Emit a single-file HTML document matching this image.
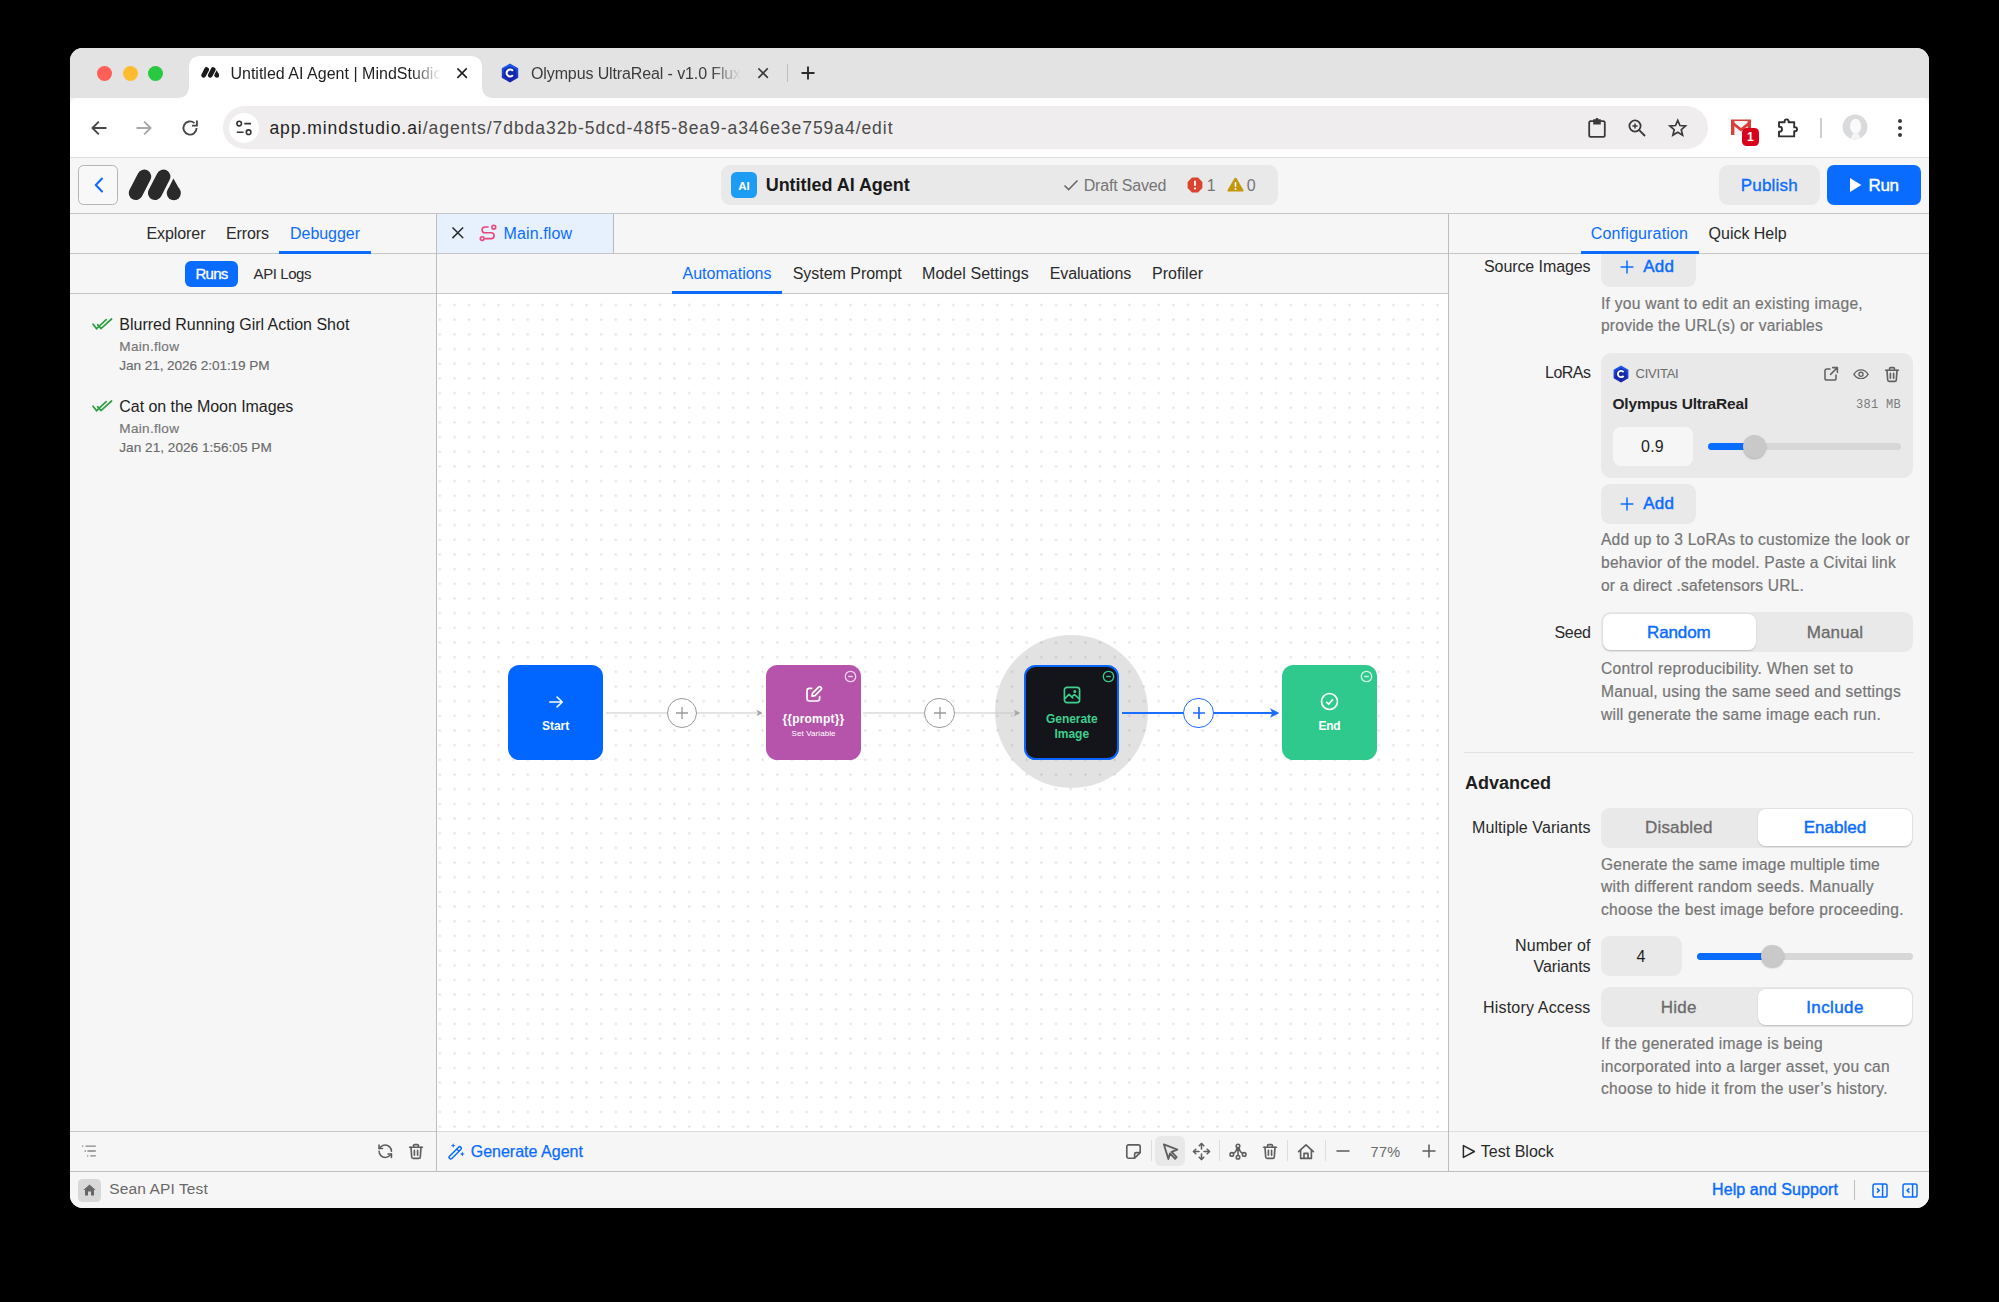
<!DOCTYPE html>
<html><head><meta charset="utf-8"><title>MindStudio</title>
<style>
html,body{margin:0;padding:0;background:#000;}
body{width:1999px;height:1302px;position:relative;overflow:hidden;font-family:"Liberation Sans",sans-serif;}
#win{position:absolute;left:0;top:0;width:1999px;height:1302px;clip-path:inset(48px 70px 94px 70px round 12.5px);background:#f6f6f6;}
.t{position:absolute;white-space:nowrap;font-kerning:none;}
.b{position:absolute;display:block;}
</style></head><body><div id="win">
<div class="b" style="left:70px;top:48px;width:1859px;height:50px;background:#e3e3e3;"></div>
<div class="b" style="left:70px;top:98px;width:1859px;height:59px;background:#ffffff;border-radius:8px 8px 0 0;"></div>
<div class="b" style="left:70px;top:157px;width:1859px;height:1px;background:#dcdcdc;"></div>
<svg class="b" style="left:177px;top:56px" width="318" height="42" viewBox="0 0 318 42">
<path d="M0 42 C8 42 12 38 12 30 L12 12 C12 4 16 0 24 0 L293 0 C301 0 305 4 305 12 L305 30 C305 38 309 42 317 42 Z" fill="#ffffff"/></svg>
<div class="b" style="left:97.10000000000001px;top:66.2px;width:15.2px;height:15.2px;background:#fe5f57;border-radius:8px;"></div>
<div class="b" style="left:122.6px;top:66.2px;width:15.2px;height:15.2px;background:#febc2e;border-radius:8px;"></div>
<div class="b" style="left:147.70000000000002px;top:66.2px;width:15.2px;height:15.2px;background:#28c840;border-radius:8px;"></div>
<svg class="b" style="left:200.70px;top:67.30px;" width="18.6" height="11" viewBox="128 169 54 32"><g fill="#1b1b1b" stroke="#1b1b1b"><g stroke-width="14" stroke-linecap="round"><line x1="144.2" y1="176.6" x2="135.8" y2="193"/><line x1="163.4" y1="176.6" x2="155" y2="193"/></g><circle cx="173.8" cy="193.2" r="7" stroke="none"/><path d="M173.4 178.6 L167.7 189.9 L179.9 189.9 Z" stroke="none" stroke-linejoin="round"/></g></svg>
<div class="t" style="left:230.40px;top:62.70px;font:400 16px/22px 'Liberation Sans',sans-serif;color:#1f1f1f;letter-spacing:0.017px;-webkit-mask-image:linear-gradient(90deg,#000 86%,transparent 100%);mask-image:linear-gradient(90deg,#000 86%,transparent 100%);">Untitled AI Agent | MindStudic</div>
<svg class="b" style="left:456.30px;top:67.20px;" width="12.2" height="12.2" viewBox="0 0 12.2 12.2"><path d="M2 2 L10.2 10.2 M10.2 2 L2 10.2" stroke="#1f1f1f" stroke-width="1.7" stroke-linecap="square" fill="none"/></svg>
<svg class="b" style="left:500.40px;top:63.00px;" width="20" height="20" viewBox="0 0 20 20"><defs><linearGradient id="cg" x1="0" y1="0" x2="0" y2="1"><stop offset="0" stop-color="#1f5bf0"/><stop offset="1" stop-color="#1a1fa8"/></linearGradient></defs><path d="M10 0.6 L18.2 5.3 V14.7 L10 19.4 L1.8 14.7 V5.3 Z" fill="url(#cg)"/><path d="M10 3.2 L15.9 6.6 V13.4 L10 16.8 L4.1 13.4 V6.6 Z" fill="#0d1a8a" opacity="0.55"/><path d="M12.9 7.9 A3.5 3.5 0 1 0 12.9 12.1" fill="none" stroke="#fff" stroke-width="2.1"/></svg>
<div class="t" style="left:531.00px;top:62.70px;font:400 16px/22px 'Liberation Sans',sans-serif;color:#3c3c3c;letter-spacing:-0.117px;-webkit-mask-image:linear-gradient(90deg,#000 86%,transparent 100%);mask-image:linear-gradient(90deg,#000 86%,transparent 100%);">Olympus UltraReal - v1.0 Flux</div>
<svg class="b" style="left:756.90px;top:67.20px;" width="12.2" height="12.2" viewBox="0 0 12.2 12.2"><path d="M2 2 L10.2 10.2 M10.2 2 L2 10.2" stroke="#3c3c3c" stroke-width="1.7" stroke-linecap="square" fill="none"/></svg>
<div class="b" style="left:786.5px;top:64px;width:1.5px;height:18px;background:#bdbdbd;"></div>
<svg class="b" style="left:800.00px;top:65.00px;" width="16" height="16" viewBox="0 0 16 16"><path d="M8 1.5 V14.5 M1.5 8 H14.5" stroke="#2b2b2b" stroke-width="1.9" fill="none"/></svg>
<svg class="b" style="left:89.00px;top:117.50px;" width="20" height="20" viewBox="0 0 20 20"><path d="M17.5 10 H3.5 M9.8 3.6 L3.4 10 L9.8 16.4" stroke="#474747" stroke-width="1.9" fill="none" stroke-linejoin="miter"/></svg>
<svg class="b" style="left:134.00px;top:117.50px;" width="20" height="20" viewBox="0 0 20 20"><path d="M2.5 10 H16.5 M10.2 3.6 L16.6 10 L10.2 16.4" stroke="#a8a8a8" stroke-width="1.9" fill="none"/></svg>
<svg class="b" style="left:179.50px;top:117.50px;" width="20" height="20" viewBox="0 0 20 20"><path d="M16.6 10 A6.6 6.6 0 1 1 14.4 5.1" stroke="#474747" stroke-width="1.9" fill="none"/><path d="M16.9 2.6 V7.6 H11.9" stroke="#474747" stroke-width="1.9" fill="none"/></svg>
<div class="b" style="left:223px;top:106px;width:1485px;height:43px;background:#efedee;border-radius:21.5px;"></div>
<div class="b" style="left:229px;top:112.5px;width:30px;height:30px;background:#ffffff;border-radius:15px;"></div>
<svg class="b" style="left:235.00px;top:119.50px;" width="18" height="16" viewBox="0 0 18 16"><circle cx="4.2" cy="3.6" r="2.3" fill="none" stroke="#333" stroke-width="1.6"/><path d="M9.3 3.6 H16" stroke="#333" stroke-width="1.6"/><circle cx="13.6" cy="12.2" r="2.3" fill="none" stroke="#333" stroke-width="1.6"/><path d="M1.8 12.2 H8.6" stroke="#333" stroke-width="1.6"/></svg>
<div class="t" style="left:269.4px;top:115.7px;font:400 17.5px/24px 'Liberation Sans',sans-serif;letter-spacing:0.949px;color:#1f1f1f">app.mindstudio.ai<span style="color:#4a4a4a">/agents/7dbda32b-5dcd-48f5-8ea9-a346e3e759a4/edit</span></div>
<svg class="b" style="left:1587.00px;top:117.00px;" width="20" height="22" viewBox="0 0 20 22"><rect x="2.2" y="4.2" width="15.6" height="15.6" rx="1.6" fill="none" stroke="#3a3a3a" stroke-width="1.8"/><path d="M6.2 2.2 H13.8 V7.4 H6.2 Z" fill="#3a3a3a"/><rect x="8.6" y="1" width="2.8" height="2.4" rx="1" fill="#3a3a3a"/></svg>
<svg class="b" style="left:1627.20px;top:117.90px;" width="20" height="20" viewBox="0 0 20 20"><circle cx="8" cy="8" r="5.6" fill="none" stroke="#3a3a3a" stroke-width="1.8"/><path d="M12.2 12.2 L18 18" stroke="#3a3a3a" stroke-width="1.9"/><path d="M8 5.4 V10.6 M5.4 8 H10.6" stroke="#3a3a3a" stroke-width="1.5"/></svg>
<svg class="b" style="left:1668.25px;top:117.65px;" width="19.5" height="19.5" viewBox="0 0 22 22"><path d="M11 2.6 L13.5 8.5 L19.8 9 L15 13.2 L16.5 19.4 L11 16.1 L5.5 19.4 L7 13.2 L2.2 9 L8.5 8.5 Z" fill="none" stroke="#3a3a3a" stroke-width="1.9" stroke-linejoin="miter"/></svg>
<svg class="b" style="left:1729.60px;top:118.50px;" width="22" height="17" viewBox="0 0 22 17"><path d="M1 1 H21 V16 H1 Z" fill="#f4f4f4"/><path d="M1 1 H4.4 V16 H1 Z M17.6 1 H21 V16 H17.6 Z" fill="#d8403a"/><path d="M1 1 L11 9 L21 1 V4.6 L11 12.4 L1 4.6 Z" fill="#d8403a"/><path d="M1 0.6 H21 V2 H1 Z" fill="#d8403a"/></svg>
<div class="b" style="left:1741.5px;top:128px;width:17.5px;height:17.5px;background:#d9001b;border-radius:4.5px;"></div>
<div class="t" style="left:1746.96px;top:129.00px;font:700 12px/17px 'Liberation Sans',sans-serif;color:#fff;">1</div>
<svg class="b" style="left:1775.30px;top:114.80px;" width="24" height="24" viewBox="0 0 24 24"><path d="M4 7.2 H9.6 V6.4 A2 2 0 0 1 13.6 6.4 V7.2 H19.2 V12.2 H20 A2 2 0 0 1 20 16.2 H19.2 V21.4 H4 V16.6 H4.6 A2.4 2.4 0 0 0 4.6 11.8 H4 Z" fill="none" stroke="#2f2f2f" stroke-width="1.9" stroke-linejoin="round"/></svg>
<div class="b" style="left:1820.3px;top:118px;width:1.6px;height:19.5px;background:#d0d0d0;"></div>
<svg class="b" style="left:1841.70px;top:114.30px;" width="26" height="26" viewBox="0 0 26 26"><defs><clipPath id="av"><circle cx="13" cy="13" r="12.4"/></clipPath></defs><circle cx="13" cy="13" r="12.4" fill="#d9dadc"/><g clip-path="url(#av)"><ellipse cx="13.6" cy="12.2" rx="5.6" ry="7.4" fill="#fafafb"/><path d="M9 27 C9 21 11 19 13.6 19 C16.4 19 18.4 21 18.4 27 Z" fill="#f4f4f6"/></g></svg>
<div class="b" style="left:1898.4px;top:119.4px;width:3.6px;height:3.6px;background:#3a3a3a;border-radius:2px;"></div>
<div class="b" style="left:1898.4px;top:126.2px;width:3.6px;height:3.6px;background:#3a3a3a;border-radius:2px;"></div>
<div class="b" style="left:1898.4px;top:133.0px;width:3.6px;height:3.6px;background:#3a3a3a;border-radius:2px;"></div>
<div class="b" style="left:70px;top:158px;width:1859px;height:55px;background:#f6f6f6;"></div>
<div class="b" style="left:70px;top:212.5px;width:1859px;height:1.5px;background:#c6c6c6;"></div>
<div class="b" style="left:78px;top:165px;width:40px;height:40px;background:#f8f8f8;border-radius:5.5px;border:1px solid #b4b4b4;box-sizing:border-box;"></div>
<svg class="b" style="left:92.50px;top:176.00px;" width="12" height="18" viewBox="0 0 12 18"><path d="M9 2.5 L2.8 9 L9 15.5" stroke="#0a6cff" stroke-width="2" fill="none" stroke-linecap="round" stroke-linejoin="round"/></svg>
<svg class="b" style="left:128.00px;top:169.00px;" width="54" height="32" viewBox="128 169 54 32"><g fill="#2a2a2a" stroke="#2a2a2a"><g stroke-width="14" stroke-linecap="round"><line x1="144.2" y1="176.6" x2="135.8" y2="193"/><line x1="163.4" y1="176.6" x2="155" y2="193"/></g><circle cx="173.8" cy="193.2" r="7" stroke="none"/><path d="M173.4 178.6 L167.7 189.9 L179.9 189.9 Z" stroke="none" stroke-linejoin="round"/></g></svg>
<div class="b" style="left:721px;top:165px;width:557px;height:40px;background:#e9e9e9;border-radius:9px;"></div>
<div class="b" style="left:731px;top:172px;width:26px;height:26px;background:#1c9cf2;border-radius:5.5px;"></div>
<div class="t" style="left:738.25px;top:177.90px;font:700 11.5px/16px 'Liberation Sans',sans-serif;color:#ffffff;">AI</div>
<div class="t" style="left:765.70px;top:173.20px;font:700 18px/25px 'Liberation Sans',sans-serif;color:#1a1a1a;letter-spacing:-0.038px;">Untitled AI Agent</div>
<svg class="b" style="left:1062.60px;top:179.00px;" width="16" height="12" viewBox="0 0 16 12"><path d="M1.5 6.5 L5.6 10.5 L14.5 1.5" stroke="#6a6a6a" stroke-width="1.6" fill="none"/></svg>
<div class="t" style="left:1083.70px;top:174.70px;font:400 16px/22px 'Liberation Sans',sans-serif;color:#757575;letter-spacing:-0.180px;">Draft Saved</div>
<svg class="b" style="left:1186.50px;top:177.00px;" width="16" height="16" viewBox="0 0 16 16"><path d="M5 0.6 H11 L15.4 5 V11 L11 15.4 H5 L0.6 11 V5 Z" fill="#d9452f"/><rect x="7.1" y="3.6" width="1.8" height="5.4" rx="0.9" fill="#fff"/><circle cx="8" cy="11.5" r="1.1" fill="#fff"/></svg>
<div class="t" style="left:1206.75px;top:174.70px;font:400 16px/22px 'Liberation Sans',sans-serif;color:#757575;">1</div>
<svg class="b" style="left:1226.50px;top:177.10px;" width="17" height="15" viewBox="0 0 17 15"><path d="M8.5 0.8 C9 0.8 9.4 1 9.7 1.5 L16.4 13 C16.9 13.9 16.3 14.6 15.4 14.6 H1.6 C0.7 14.6 0.1 13.9 0.6 13 L7.3 1.5 C7.6 1 8 0.8 8.5 0.8 Z" fill="#c4960c"/><rect x="7.7" y="5" width="1.6" height="5" rx="0.8" fill="#fff"/><circle cx="8.5" cy="12" r="1" fill="#fff"/></svg>
<div class="t" style="left:1246.85px;top:174.70px;font:400 16px/22px 'Liberation Sans',sans-serif;color:#757575;">0</div>
<div class="b" style="left:1719px;top:165px;width:100.5px;height:40px;background:#e9e9e9;border-radius:9px;"></div>
<div class="t" style="left:1740.80px;top:173.70px;font:400 17px/24px 'Liberation Sans',sans-serif;color:#0a6cff;letter-spacing:0.178px;-webkit-text-stroke:0.35px #0a6cff;">Publish</div>
<div class="b" style="left:1827px;top:165px;width:94px;height:40px;background:#0a6cff;border-radius:7px;"></div>
<svg class="b" style="left:1849.00px;top:177.00px;" width="13" height="16" viewBox="0 0 13 16"><path d="M1 1 L12.3 8 L1 15 Z" fill="#fff"/></svg>
<div class="t" style="left:1868.50px;top:173.70px;font:400 17px/24px 'Liberation Sans',sans-serif;color:#ffffff;letter-spacing:-0.395px;-webkit-text-stroke:0.4px #ffffff;">Run</div>
<div class="b" style="left:436px;top:214px;width:1px;height:957px;background:#bdbdbd;"></div>
<div class="b" style="left:70px;top:253px;width:366px;height:1px;background:#c6c6c6;"></div>
<div class="b" style="left:70px;top:293px;width:366px;height:1px;background:#c6c6c6;"></div>
<div class="t" style="left:146.40px;top:223.10px;font:400 16px/22px 'Liberation Sans',sans-serif;color:#2a2a2a;letter-spacing:-0.072px;">Explorer</div>
<div class="t" style="left:226.00px;top:223.10px;font:400 16px/22px 'Liberation Sans',sans-serif;color:#2a2a2a;letter-spacing:-0.092px;">Errors</div>
<div class="t" style="left:290.00px;top:223.10px;font:400 16px/22px 'Liberation Sans',sans-serif;color:#0a6cff;letter-spacing:-0.033px;">Debugger</div>
<div class="b" style="left:279px;top:251px;width:91.5px;height:2.5px;background:#0a6cff;"></div>
<div class="b" style="left:185px;top:260.5px;width:53px;height:26.5px;background:#0a6cff;border-radius:6px;"></div>
<div class="t" style="left:195.50px;top:263.10px;font:400 15px/21px 'Liberation Sans',sans-serif;color:#ffffff;letter-spacing:-0.754px;-webkit-text-stroke:0.3px #ffffff;">Runs</div>
<div class="t" style="left:253.60px;top:263.10px;font:400 15px/21px 'Liberation Sans',sans-serif;color:#2a2a2a;letter-spacing:-0.421px;">API Logs</div>
<svg class="b" style="left:91.80px;top:318.20px;" width="21" height="12" viewBox="0 0 21 12"><path d="M1 6.2 L4.6 10.6 M5.6 6.6 L9 10.6 L19.6 1" stroke="#2f9e44" stroke-width="1.7" fill="none" stroke-linecap="round"/><path d="M4.6 10.6 L14.2 1.6" stroke="#2f9e44" stroke-width="1.7" fill="none" stroke-linecap="round"/></svg>
<div class="t" style="left:119.30px;top:314.20px;font:400 16px/22px 'Liberation Sans',sans-serif;color:#1f1f1f;letter-spacing:-0.010px;">Blurred Running Girl Action Shot</div>
<div class="t" style="left:119.30px;top:336.70px;font:400 13.6px/19px 'Liberation Sans',sans-serif;color:#757575;letter-spacing:0.285px;-webkit-text-stroke:0.15px #757575;">Main.flow</div>
<div class="t" style="left:119.30px;top:356.10px;font:400 13.6px/19px 'Liberation Sans',sans-serif;color:#6a6a6a;letter-spacing:-0.072px;-webkit-text-stroke:0.15px #6a6a6a;">Jan 21, 2026 2:01:19 PM</div>
<svg class="b" style="left:91.80px;top:400.00px;" width="21" height="12" viewBox="0 0 21 12"><path d="M1 6.2 L4.6 10.6 M5.6 6.6 L9 10.6 L19.6 1" stroke="#2f9e44" stroke-width="1.7" fill="none" stroke-linecap="round"/><path d="M4.6 10.6 L14.2 1.6" stroke="#2f9e44" stroke-width="1.7" fill="none" stroke-linecap="round"/></svg>
<div class="t" style="left:119.30px;top:396.00px;font:400 16px/22px 'Liberation Sans',sans-serif;color:#1f1f1f;letter-spacing:-0.054px;">Cat on the Moon Images</div>
<div class="t" style="left:119.30px;top:418.50px;font:400 13.6px/19px 'Liberation Sans',sans-serif;color:#757575;letter-spacing:0.285px;-webkit-text-stroke:0.15px #757575;">Main.flow</div>
<div class="t" style="left:119.30px;top:437.90px;font:400 13.6px/19px 'Liberation Sans',sans-serif;color:#6a6a6a;letter-spacing:0.023px;-webkit-text-stroke:0.15px #6a6a6a;">Jan 21, 2026 1:56:05 PM</div>
<div class="b" style="left:70px;top:1130.5px;width:366px;height:1px;background:#c6c6c6;"></div>
<svg class="b" style="left:81.00px;top:1145.20px;" width="16" height="12" viewBox="0 0 16 12"><g stroke="#858585" stroke-width="1.3" fill="none"><path d="M4.5 1.2 H14.8 M6.4 6 H14.8 M9.3 10.8 H14.8"/><path d="M0.9 1.2 H2.2 M3.6 6 H4.9 M6 10.8 H7.3"/></g></svg>
<div class="b" style="left:437px;top:214px;width:176px;height:39px;background:#e7f1fd;"></div>
<div class="b" style="left:613px;top:214px;width:1px;height:39px;background:#b9b9b9;"></div>
<div class="b" style="left:437px;top:253px;width:1011px;height:1px;background:#c6c6c6;"></div>
<div class="b" style="left:437px;top:293px;width:1011px;height:1px;background:#c6c6c6;"></div>
<svg class="b" style="left:450.60px;top:226.40px;" width="13.6" height="13.6" viewBox="0 0 13.6 13.6"><path d="M2 2 L11.6 11.6 M11.6 2 L2 11.6" stroke="#2a2a2a" stroke-width="1.5" stroke-linecap="square" fill="none"/></svg>
<div class="t" style="left:503.60px;top:222.90px;font:400 16px/22px 'Liberation Sans',sans-serif;color:#0a6cff;letter-spacing:0.103px;">Main.flow</div>
<svg class="b" style="left:478.70px;top:224.00px;" width="18" height="18" viewBox="0 0 18 18"><g fill="none" stroke="#e8467c" stroke-width="1.6"><circle cx="3.2" cy="14.6" r="1.9"/><circle cx="14.8" cy="3.2" r="1.9"/><path d="M5.4 14.6 H12.2 A2.9 2.9 0 0 0 12.2 8.8 H6 A2.9 2.9 0 0 1 6 3 H9.6"/></g></svg>
<div class="t" style="left:682.50px;top:263.30px;font:400 16px/22px 'Liberation Sans',sans-serif;color:#0a6cff;letter-spacing:0.006px;">Automations</div>
<div class="t" style="left:792.70px;top:263.30px;font:400 16px/22px 'Liberation Sans',sans-serif;color:#2a2a2a;letter-spacing:-0.027px;">System Prompt</div>
<div class="t" style="left:922.00px;top:263.30px;font:400 16px/22px 'Liberation Sans',sans-serif;color:#2a2a2a;letter-spacing:0.062px;">Model Settings</div>
<div class="t" style="left:1049.80px;top:263.30px;font:400 16px/22px 'Liberation Sans',sans-serif;color:#2a2a2a;letter-spacing:-0.138px;">Evaluations</div>
<div class="t" style="left:1151.90px;top:263.30px;font:400 16px/22px 'Liberation Sans',sans-serif;color:#2a2a2a;letter-spacing:0.065px;">Profiler</div>
<div class="b" style="left:672.4px;top:291px;width:109.6px;height:2.5px;background:#0a6cff;"></div>
<div class="b" style="left:437px;top:294px;width:1011px;height:836.5px;background:#ffffff;background-image:radial-gradient(circle at 1.5px 1.5px,#e1e1e1 0.8px,rgba(225,225,225,0) 1.5px);background-size:14.678px 14.678px;background-position:1.30px 9.50px;"></div>
<div class="b" style="left:995.3px;top:635.3px;width:153px;height:153px;background:rgba(110,110,110,0.2);border-radius:77px;"></div>
<svg class="b" style="left:605.50px;top:706.90px;" width="156.89999999999998" height="12" viewBox="0 0 156.89999999999998 12"><path d="M0 6 H153.89999999999998" stroke="#c8c8c8" stroke-width="1" fill="none"/><path d="M150.39999999999998 2.7 L156.89999999999998 6 L150.39999999999998 9.3 L152.02499999999998 6 Z" fill="#a6a6a6"/></svg>
<div class="b" style="left:666.9000000000001px;top:697.6px;width:30.6px;height:30.6px;background:#ffffff;border-radius:16px;border:1px solid #9a9a9a;box-sizing:border-box;"></div>
<svg class="b" style="left:675.20px;top:705.90px;" width="14" height="14" viewBox="0 0 14 14"><path d="M7 1 V13 M1 7 H13" stroke="#9a9a9a" stroke-width="1.3" fill="none"/></svg>
<svg class="b" style="left:863.00px;top:706.90px;" width="157.29999999999995" height="12" viewBox="0 0 157.29999999999995 12"><path d="M0 6 H154.29999999999995" stroke="#c8c8c8" stroke-width="1" fill="none"/><path d="M150.79999999999995 2.7 L157.29999999999995 6 L150.79999999999995 9.3 L152.42499999999995 6 Z" fill="#a6a6a6"/></svg>
<div class="b" style="left:924.4000000000001px;top:697.6px;width:30.6px;height:30.6px;background:#ffffff;border-radius:16px;border:1px solid #9a9a9a;box-sizing:border-box;"></div>
<svg class="b" style="left:932.70px;top:705.90px;" width="14" height="14" viewBox="0 0 14 14"><path d="M7 1 V13 M1 7 H13" stroke="#9a9a9a" stroke-width="1.3" fill="none"/></svg>
<svg class="b" style="left:1121.50px;top:706.90px;" width="157.5" height="12" viewBox="0 0 157.5 12"><path d="M0 6 H154.5" stroke="#1a6dff" stroke-width="1.8" fill="none"/><path d="M148.0 1.2999999999999998 L157.5 6 L148.0 10.7 L150.375 6 Z" fill="#1a6dff"/></svg>
<div class="b" style="left:1183.2px;top:697.6px;width:30.6px;height:30.6px;background:#ffffff;border-radius:16px;border:1.6px solid #1a6dff;box-sizing:border-box;"></div>
<svg class="b" style="left:1191.50px;top:705.90px;" width="14" height="14" viewBox="0 0 14 14"><path d="M7 1 V13 M1 7 H13" stroke="#1a6dff" stroke-width="1.7" fill="none"/></svg>
<div class="b" style="left:508px;top:665px;width:95px;height:95px;background:#0066ff;border-radius:11.5px;"></div>
<svg class="b" style="left:547.60px;top:695.00px;" width="16" height="14" viewBox="0 0 16 14"><path d="M1.2 7 H14 M8.6 1.6 L14.2 7 L8.6 12.4" stroke="#fff" stroke-width="1.5" fill="none"/></svg>
<div class="t" style="left:542.10px;top:717.80px;font:700 12px/17px 'Liberation Sans',sans-serif;color:#ffffff;letter-spacing:-0.068px;">Start</div>
<div class="b" style="left:766px;top:665px;width:95px;height:95px;background:#b654ab;border-radius:11.5px;"></div>
<svg class="b" style="left:844.10px;top:669.90px;" width="13" height="13" viewBox="0 0 13 13"><circle cx="6.5" cy="6.5" r="5.2" fill="none" stroke="#f0d3ec" stroke-width="1.3"/><path d="M4.2 6.5 H8.8" stroke="#f0d3ec" stroke-width="1.4"/></svg>
<svg class="b" style="left:804.60px;top:685.40px;" width="18" height="18" viewBox="0 0 18 18"><g fill="none" stroke="#fff" stroke-width="1.7" stroke-linejoin="round" stroke-linecap="round"><path d="M6.6 3.4 H4.4 A2.4 2.4 0 0 0 2 5.8 V13.6 A2.4 2.4 0 0 0 4.4 16 H12.2 A2.4 2.4 0 0 0 14.6 13.6 V11.6"/><path d="M7 11.2 L7.6 8.2 L13.6 2.2 A1.7 1.7 0 0 1 16 4.6 L10 10.6 Z"/></g></svg>
<div class="t" style="left:782.40px;top:710.50px;font:700 12px/17px 'Liberation Sans',sans-serif;color:#ffffff;letter-spacing:0.199px;">{{prompt}}</div>
<div class="t" style="left:791.60px;top:728.40px;font:400 8px/11px 'Liberation Sans',sans-serif;color:#ffffff;letter-spacing:0.084px;">Set Variable</div>
<div class="b" style="left:1024px;top:665px;width:95px;height:95px;background:#14151a;border-radius:11.5px;border:2px solid #0a66ff;box-sizing:border-box;"></div>
<svg class="b" style="left:1102.30px;top:669.80px;" width="13" height="13" viewBox="0 0 13 13"><circle cx="6.5" cy="6.5" r="5.2" fill="none" stroke="#39c98a" stroke-width="1.3"/><path d="M4.2 6.5 H8.8" stroke="#39c98a" stroke-width="1.4"/></svg>
<svg class="b" style="left:1062.80px;top:685.60px;" width="18" height="18" viewBox="0 0 18 18"><g fill="none" stroke="#3ecf8e" stroke-width="1.65" stroke-linejoin="round" stroke-linecap="round"><rect x="1.4" y="1.4" width="15.2" height="15.2" rx="2.6"/><path d="M1.8 12.6 L6 8.4 L9.8 12 M8.6 10.8 L11.4 8.6 L16.2 12.6"/><circle cx="11.8" cy="5.4" r="0.7" fill="#3ecf8e"/></g></svg>
<div class="t" style="left:1046.05px;top:710.50px;font:700 12px/17px 'Liberation Sans',sans-serif;color:#3ecf8e;letter-spacing:-0.065px;">Generate</div>
<div class="t" style="left:1054.55px;top:725.60px;font:700 12px/17px 'Liberation Sans',sans-serif;color:#3ecf8e;letter-spacing:-0.036px;">Image</div>
<div class="b" style="left:1282px;top:665px;width:95px;height:95px;background:#30c98d;border-radius:11.5px;"></div>
<svg class="b" style="left:1360.10px;top:669.80px;" width="13" height="13" viewBox="0 0 13 13"><circle cx="6.5" cy="6.5" r="5.2" fill="none" stroke="#d5f5e8" stroke-width="1.3"/><path d="M4.2 6.5 H8.8" stroke="#d5f5e8" stroke-width="1.4"/></svg>
<svg class="b" style="left:1319.90px;top:692.00px;" width="19" height="19" viewBox="0 0 19 19"><circle cx="9.5" cy="9.5" r="8" fill="none" stroke="#fff" stroke-width="1.7"/><path d="M6.2 9.8 L8.7 12.2 L12.9 7.4" stroke="#fff" stroke-width="1.6" fill="none"/></svg>
<div class="t" style="left:1318.60px;top:717.70px;font:700 12px/17px 'Liberation Sans',sans-serif;color:#ffffff;letter-spacing:-0.354px;">End</div>
<div class="b" style="left:437px;top:1130.5px;width:1011px;height:1px;background:#dadada;"></div>
<div class="b" style="left:437px;top:1131.5px;width:1011px;height:39.5px;background:#f6f6f6;"></div>
<div class="b" style="left:70px;top:1170.5px;width:1859px;height:1px;background:#bdbdbd;"></div>
<svg class="b" style="left:447.50px;top:1142.50px;" width="17" height="17" viewBox="0 0 17 17"><path d="M2.7 14.3 L11.7 5.3" stroke="#0a6cff" stroke-width="4.7" stroke-linecap="round"/><path d="M2.7 14.3 L11.7 5.3" stroke="#f6f6f6" stroke-width="1.7" stroke-linecap="round"/><path d="M8.7 6 L11 8.3" stroke="#0a6cff" stroke-width="1.4"/><path d="M5.2 0.20000000000000018 L5.872 1.928 L7.6 2.6 L5.872 3.2720000000000002 L5.2 5.0 L4.5280000000000005 3.2720000000000002 L2.8000000000000003 2.6 L4.5280000000000005 1.928 Z M14.3 8.6 L14.972000000000001 10.328 L16.7 11.0 L14.972000000000001 11.672 L14.3 13.4 L13.628 11.672 L11.9 11.0 L13.628 10.328 Z" fill="#0a6cff"/></svg>
<div class="t" style="left:470.70px;top:1140.70px;font:400 16px/22px 'Liberation Sans',sans-serif;color:#0a6cff;letter-spacing:0.009px;-webkit-text-stroke:0.25px #0a6cff;">Generate Agent</div>
<svg class="b" style="left:377.25px;top:1142.85px;" width="16.5" height="16.5" viewBox="0 0 24 24"><g fill="none" stroke="#5e5e5e" stroke-width="2.3" stroke-linecap="round" stroke-linejoin="round"><path d="M21 12a9 9 0 0 0-9-9 9.75 9.75 0 0 0-6.74 2.74L3 8"/><path d="M3 3v5h5"/><path d="M3 12a9 9 0 0 0 9 9 9.75 9.75 0 0 0 6.74-2.74L21 16"/><path d="M16 16h5v5"/></g></svg>
<svg class="b" style="left:407.90px;top:1142.60px;" width="16" height="17" viewBox="0 0 16 17"><g fill="none" stroke="#5e5e5e" stroke-width="1.65" stroke-linecap="round" stroke-linejoin="round"><path d="M1.6 4.2 H14.4"/><path d="M5.6 4 V2.6 A1 1 0 0 1 6.6 1.6 H9.4 A1 1 0 0 1 10.4 2.6 V4"/><path d="M3 4.4 L3.7 14 A1.5 1.5 0 0 0 5.2 15.4 H10.8 A1.5 1.5 0 0 0 12.3 14 L13 4.4"/><path d="M6.4 7.4 V12.2 M9.6 7.4 V12.2"/></g></svg>
<svg class="b" style="left:1124.80px;top:1142.70px;" width="17" height="17" viewBox="0 0 17 17"><g fill="none" stroke="#5e5e5e" stroke-width="1.65" stroke-linejoin="round"><path d="M3.6 1.8 H13.4 A1.8 1.8 0 0 1 15.2 3.6 V9.6 L9.6 15.2 H3.6 A1.8 1.8 0 0 1 1.8 13.4 V3.6 A1.8 1.8 0 0 1 3.6 1.8 Z"/><path d="M15 9.6 H11.2 A1.6 1.6 0 0 0 9.6 11.2 V15"/></g></svg>
<div class="b" style="left:1151.3px;top:1140px;width:1px;height:21px;background:#dedede;"></div>
<div class="b" style="left:1155px;top:1136.3px;width:30px;height:30px;background:#e8e8e8;border-radius:6px;"></div>
<svg class="b" style="left:1160.50px;top:1141.90px;" width="19" height="19" viewBox="0 0 17 17"><path d="M2.6 2.2 L14.6 6.8 L9.4 8.8 L14 13.6 L12.6 15 L8 10.2 L6.6 15.2 Z" fill="none" stroke="#5e5e5e" stroke-width="1.65" stroke-linejoin="round"/></svg>
<svg class="b" style="left:1192.30px;top:1141.70px;" width="19" height="19" viewBox="0 0 19 19"><g fill="none" stroke="#5e5e5e" stroke-width="1.55" stroke-linecap="round" stroke-linejoin="round"><path d="M9.5 1.6 V7 M9.5 12 V17.4 M1.6 9.5 H7 M12 9.5 H17.4"/><path d="M7.2 3.8 L9.5 1.5 L11.8 3.8 M7.2 15.2 L9.5 17.5 L11.8 15.2 M3.8 7.2 L1.5 9.5 L3.8 11.8 M15.2 7.2 L17.5 9.5 L15.2 11.8"/></g></svg>
<div class="b" style="left:1218.8px;top:1140px;width:1px;height:21px;background:#dedede;"></div>
<svg class="b" style="left:1229.00px;top:1142.50px;" width="18" height="17" viewBox="0 0 18 17"><g fill="none" stroke="#5e5e5e" stroke-width="1.55"><circle cx="9" cy="3" r="1.8"/><circle cx="2.8" cy="11.4" r="1.8"/><circle cx="15.2" cy="11.4" r="1.8"/><circle cx="9" cy="14.2" r="1.8"/><path d="M9 4.8 V12.4 M8.2 4.6 C7.6 8 5.8 9.6 4.4 10.4 M9.8 4.6 C10.4 8 12.2 9.6 13.6 10.4"/></g></svg>
<svg class="b" style="left:1261.50px;top:1142.50px;" width="16" height="17" viewBox="0 0 16 17"><g fill="none" stroke="#5e5e5e" stroke-width="1.65" stroke-linecap="round" stroke-linejoin="round"><path d="M1.6 4.2 H14.4"/><path d="M5.6 4 V2.6 A1 1 0 0 1 6.6 1.6 H9.4 A1 1 0 0 1 10.4 2.6 V4"/><path d="M3 4.4 L3.7 14 A1.5 1.5 0 0 0 5.2 15.4 H10.8 A1.5 1.5 0 0 0 12.3 14 L13 4.4"/><path d="M6.4 7.4 V12.2 M9.6 7.4 V12.2"/></g></svg>
<div class="b" style="left:1287.2px;top:1140px;width:1px;height:21px;background:#dedede;"></div>
<svg class="b" style="left:1297.30px;top:1142.50px;" width="18" height="17" viewBox="0 0 18 17"><g fill="none" stroke="#5e5e5e" stroke-width="1.65" stroke-linejoin="round" stroke-linecap="round"><path d="M1.6 8.6 L9 1.8 L16.4 8.6"/><path d="M3.6 7.2 V15.4 H14.4 V7.2"/><path d="M7 15.2 V10.4 H11 V15.2"/></g></svg>
<div class="b" style="left:1324.5px;top:1140px;width:1px;height:21px;background:#dedede;"></div>
<svg class="b" style="left:1335.50px;top:1149.30px;" width="14" height="4" viewBox="0 0 14 4"><path d="M0.5 2 H13.5" stroke="#5e5e5e" stroke-width="1.55"/></svg>
<div class="t" style="left:1370.50px;top:1141.70px;font:400 14.5px/20px 'Liberation Sans',sans-serif;color:#6a6a6a;letter-spacing:0.327px;">77%</div>
<svg class="b" style="left:1421.80px;top:1144.30px;" width="14" height="14" viewBox="0 0 14 14"><path d="M7 0.5 V13.5 M0.5 7 H13.5" stroke="#5e5e5e" stroke-width="1.55"/></svg>
<div class="b" style="left:70px;top:1171.5px;width:1859px;height:37px;background:#f6f6f6;"></div>
<div class="b" style="left:78px;top:1179px;width:23px;height:22.6px;background:#d8d8d8;border-radius:4.5px;"></div>
<svg class="b" style="left:83.10px;top:1184.20px;" width="13" height="12" viewBox="0 0 13 12"><path d="M6.5 0.6 L12.6 6 H11 V11.4 H8 V7.6 H5 V11.4 H2 V6 H0.4 Z" fill="#676767"/></svg>
<div class="t" style="left:109.30px;top:1178.40px;font:400 15.5px/22px 'Liberation Sans',sans-serif;color:#686868;letter-spacing:0.109px;">Sean API Test</div>
<div class="t" style="left:1712.00px;top:1179.00px;font:400 16px/22px 'Liberation Sans',sans-serif;color:#0a6cff;letter-spacing:0.092px;-webkit-text-stroke:0.4px #0a6cff;">Help and Support</div>
<div class="b" style="left:1853.6px;top:1180px;width:1.5px;height:19.5px;background:#bcbcbc;"></div>
<svg class="b" style="left:1872.00px;top:1182.50px;" width="16" height="15" viewBox="0 0 16 15"><g fill="none" stroke="#0a6cff" stroke-width="1.5"><rect x="1" y="1" width="14" height="13" rx="1.8"/><path d="M10.6 1 V14"/><path d="M5 5.4 L7.2 7.5 L5 9.6" stroke-width="1.55"/></g></svg>
<svg class="b" style="left:1902.00px;top:1182.50px;" width="16" height="15" viewBox="0 0 16 15"><g fill="none" stroke="#0a6cff" stroke-width="1.5"><rect x="1" y="1" width="14" height="13" rx="1.8"/><path d="M10.6 1 V14"/><path d="M7.4 5.4 L5.2 7.5 L7.4 9.6" stroke-width="1.55"/></g></svg>
<div class="b" style="left:1448px;top:214px;width:1px;height:957px;background:#bdbdbd;"></div>
<div class="b" style="left:1601px;top:246.5px;width:94.5px;height:40px;background:#e9e9e9;border-radius:9px;"></div>
<svg class="b" style="left:1620.00px;top:259.80px;" width="14" height="14" viewBox="0 0 14 14"><path d="M7 0.6 V13.4 M0.6 7 H13.4" stroke="#0a6cff" stroke-width="1.5"/></svg>
<div class="t" style="left:1643.20px;top:255.40px;font:400 17px/24px 'Liberation Sans',sans-serif;color:#0a6cff;letter-spacing:0.251px;-webkit-text-stroke:0.45px #0a6cff;">Add</div>
<div class="t" style="left:1484.00px;top:255.90px;font:400 16px/22px 'Liberation Sans',sans-serif;color:#2a2a2a;letter-spacing:-0.085px;">Source Images</div>
<div class="t" style="left:1601.00px;top:292.50px;font:400 15.6px/22px 'Liberation Sans',sans-serif;color:#757575;letter-spacing:0.255px;-webkit-text-stroke:0.2px #757575;">If you want to edit an existing image,</div>
<div class="t" style="left:1601.00px;top:315.10px;font:400 15.6px/22px 'Liberation Sans',sans-serif;color:#757575;letter-spacing:0.198px;-webkit-text-stroke:0.2px #757575;">provide the URL(s) or variables</div>
<div class="t" style="left:1545.00px;top:362.20px;font:400 16px/22px 'Liberation Sans',sans-serif;color:#2a2a2a;letter-spacing:-0.505px;">LoRAs</div>
<div class="b" style="left:1601px;top:352.5px;width:311.5px;height:125px;background:#e9e9e9;border-radius:10px;"></div>
<svg class="b" style="left:1611.80px;top:364.80px;" width="18" height="18" viewBox="0 0 20 20"><defs><linearGradient id="cg2" x1="0" y1="0" x2="0" y2="1"><stop offset="0" stop-color="#1f5bf0"/><stop offset="1" stop-color="#1a1fa8"/></linearGradient></defs><path d="M10 0.6 L18.2 5.3 V14.7 L10 19.4 L1.8 14.7 V5.3 Z" fill="url(#cg2)"/><path d="M10 3.2 L15.9 6.6 V13.4 L10 16.8 L4.1 13.4 V6.6 Z" fill="#0d1a8a" opacity="0.55"/><path d="M12.9 7.9 A3.5 3.5 0 1 0 12.9 12.1" fill="none" stroke="#fff" stroke-width="2.1"/></svg>
<div class="t" style="left:1635.50px;top:364.90px;font:400 13px/18px 'Liberation Sans',sans-serif;color:#6b6b6b;letter-spacing:-0.220px;">CIVITAI</div>
<svg class="b" style="left:1822.80px;top:366.00px;" width="16" height="16" viewBox="0 0 16 16"><g fill="none" stroke="#626262" stroke-width="1.55" stroke-linecap="round" stroke-linejoin="round"><path d="M7 3 H3.8 A1.8 1.8 0 0 0 2 4.8 V12.2 A1.8 1.8 0 0 0 3.8 14 H11.2 A1.8 1.8 0 0 0 13 12.2 V9"/><path d="M9.6 1.6 H14.4 V6.4 M14.2 1.8 L7.6 8.4"/></g></svg>
<svg class="b" style="left:1853.00px;top:368.65px;" width="16" height="10.7" viewBox="0 0 18 12"><g fill="none" stroke="#626262" stroke-width="1.55"><path d="M1 6 C3.2 2.4 6 1 9 1 C12 1 14.8 2.4 17 6 C14.8 9.6 12 11 9 11 C6 11 3.2 9.6 1 6 Z"/><circle cx="9" cy="6" r="2.3"/></g></svg>
<svg class="b" style="left:1883.60px;top:365.50px;" width="16" height="17" viewBox="0 0 16 17"><g fill="none" stroke="#626262" stroke-width="1.65" stroke-linecap="round" stroke-linejoin="round"><path d="M1.6 4.2 H14.4"/><path d="M5.6 4 V2.6 A1 1 0 0 1 6.6 1.6 H9.4 A1 1 0 0 1 10.4 2.6 V4"/><path d="M3 4.4 L3.7 14 A1.5 1.5 0 0 0 5.2 15.4 H10.8 A1.5 1.5 0 0 0 12.3 14 L13 4.4"/><path d="M6.4 7.4 V12.2 M9.6 7.4 V12.2"/></g></svg>
<div class="t" style="left:1612.50px;top:392.80px;font:700 15.5px/22px 'Liberation Sans',sans-serif;color:#222222;letter-spacing:-0.187px;">Olympus UltraReal</div>
<div class="t" style="left:1856.00px;top:396.50px;font:400 12px/17px 'Liberation Mono',monospace;color:#7a7a7a;letter-spacing:0.298px;">381 MB</div>
<div class="b" style="left:1612.5px;top:426.8px;width:80.5px;height:39.5px;background:#f6f6f6;border-radius:8px;"></div>
<div class="t" style="left:1641.00px;top:436.20px;font:400 16px/22px 'Liberation Sans',sans-serif;color:#1f1f1f;letter-spacing:0.253px;">0.9</div>
<div class="b" style="left:1708px;top:443.0px;width:193px;height:7px;background:#d7d7d7;border-radius:3.5px;"></div>
<div class="b" style="left:1708px;top:443.0px;width:46.5px;height:7px;background:#0a6cff;border-radius:3.5px;"></div>
<div class="b" style="left:1743.3px;top:435.3px;width:22.4px;height:22.4px;background:#c9c9c9;border-radius:12px;box-shadow:0 1px 2px rgba(0,0,0,0.25);"></div>
<div class="b" style="left:1601px;top:483.5px;width:94.5px;height:40px;background:#e9e9e9;border-radius:9px;"></div>
<svg class="b" style="left:1620.00px;top:496.80px;" width="14" height="14" viewBox="0 0 14 14"><path d="M7 0.6 V13.4 M0.6 7 H13.4" stroke="#0a6cff" stroke-width="1.5"/></svg>
<div class="t" style="left:1643.20px;top:492.40px;font:400 17px/24px 'Liberation Sans',sans-serif;color:#0a6cff;letter-spacing:0.251px;-webkit-text-stroke:0.45px #0a6cff;">Add</div>
<div class="t" style="left:1601.00px;top:529.30px;font:400 15.6px/22px 'Liberation Sans',sans-serif;color:#757575;letter-spacing:0.214px;-webkit-text-stroke:0.2px #757575;">Add up to 3 LoRAs to customize the look or</div>
<div class="t" style="left:1601.00px;top:552.00px;font:400 15.6px/22px 'Liberation Sans',sans-serif;color:#757575;letter-spacing:0.206px;-webkit-text-stroke:0.2px #757575;">behavior of the model. Paste a Civitai link</div>
<div class="t" style="left:1601.00px;top:574.70px;font:400 15.6px/22px 'Liberation Sans',sans-serif;color:#757575;letter-spacing:0.154px;-webkit-text-stroke:0.2px #757575;">or a direct .safetensors URL.</div>
<div class="t" style="left:1554.50px;top:621.70px;font:400 16px/22px 'Liberation Sans',sans-serif;color:#2a2a2a;letter-spacing:-0.341px;">Seed</div>
<div class="b" style="left:1601px;top:612px;width:311.5px;height:40px;background:#e9e9e9;border-radius:9px;"></div>
<div class="b" style="left:1602.5px;top:613.7px;width:153.5px;height:36.8px;background:#ffffff;border-radius:7.5px;box-shadow:0 0.5px 1.5px rgba(0,0,0,0.18);"></div>
<div class="t" style="left:1647.05px;top:620.90px;font:400 17px/24px 'Liberation Sans',sans-serif;color:#0a6cff;letter-spacing:-0.125px;-webkit-text-stroke:0.45px #0a6cff;">Random</div>
<div class="t" style="left:1806.75px;top:620.90px;font:400 17px/24px 'Liberation Sans',sans-serif;color:#6b6b6b;letter-spacing:0.125px;-webkit-text-stroke:0.3px #6b6b6b;">Manual</div>
<div class="t" style="left:1601.00px;top:658.10px;font:400 15.6px/22px 'Liberation Sans',sans-serif;color:#757575;letter-spacing:0.303px;-webkit-text-stroke:0.2px #757575;">Control reproducibility. When set to</div>
<div class="t" style="left:1601.00px;top:680.80px;font:400 15.6px/22px 'Liberation Sans',sans-serif;color:#757575;letter-spacing:0.194px;-webkit-text-stroke:0.2px #757575;">Manual, using the same seed and settings</div>
<div class="t" style="left:1601.00px;top:703.50px;font:400 15.6px/22px 'Liberation Sans',sans-serif;color:#757575;letter-spacing:0.204px;-webkit-text-stroke:0.2px #757575;">will generate the same image each run.</div>
<div class="b" style="left:1464px;top:751.5px;width:448.5px;height:1.2px;background:#e2e2e2;"></div>
<div class="t" style="left:1465.00px;top:770.70px;font:700 18px/25px 'Liberation Sans',sans-serif;color:#1f1f1f;letter-spacing:-0.003px;">Advanced</div>
<div class="t" style="left:1472.00px;top:817.20px;font:400 16px/22px 'Liberation Sans',sans-serif;color:#2a2a2a;letter-spacing:0.084px;">Multiple Variants</div>
<div class="b" style="left:1601px;top:807.5px;width:311.5px;height:40px;background:#e9e9e9;border-radius:9px;"></div>
<div class="b" style="left:1758px;top:809.2px;width:153.5px;height:36.8px;background:#ffffff;border-radius:7.5px;box-shadow:0 0.5px 1.5px rgba(0,0,0,0.18);"></div>
<div class="t" style="left:1645.05px;top:816.40px;font:400 17px/24px 'Liberation Sans',sans-serif;color:#6b6b6b;letter-spacing:0.169px;-webkit-text-stroke:0.3px #6b6b6b;">Disabled</div>
<div class="t" style="left:1803.75px;top:816.40px;font:400 17px/24px 'Liberation Sans',sans-serif;color:#0a6cff;letter-spacing:0.016px;-webkit-text-stroke:0.45px #0a6cff;">Enabled</div>
<div class="t" style="left:1601.00px;top:853.60px;font:400 15.6px/22px 'Liberation Sans',sans-serif;color:#757575;letter-spacing:0.183px;-webkit-text-stroke:0.2px #757575;">Generate the same image multiple time</div>
<div class="t" style="left:1601.00px;top:876.20px;font:400 15.6px/22px 'Liberation Sans',sans-serif;color:#757575;letter-spacing:0.286px;-webkit-text-stroke:0.2px #757575;">with different random seeds. Manually</div>
<div class="t" style="left:1601.00px;top:898.80px;font:400 15.6px/22px 'Liberation Sans',sans-serif;color:#757575;letter-spacing:0.291px;-webkit-text-stroke:0.2px #757575;">choose the best image before proceeding.</div>
<div class="t" style="left:1515.00px;top:935.30px;font:400 16px/22px 'Liberation Sans',sans-serif;color:#2a2a2a;letter-spacing:0.090px;">Number of</div>
<div class="t" style="left:1533.50px;top:955.50px;font:400 16px/22px 'Liberation Sans',sans-serif;color:#2a2a2a;letter-spacing:-0.063px;">Variants</div>
<div class="b" style="left:1601px;top:935.8px;width:81px;height:40.5px;background:#e9e9e9;border-radius:9px;"></div>
<div class="t" style="left:1636.55px;top:945.90px;font:400 16px/22px 'Liberation Sans',sans-serif;color:#1f1f1f;">4</div>
<div class="b" style="left:1697px;top:952.8px;width:215.5px;height:7px;background:#d7d7d7;border-radius:3.5px;"></div>
<div class="b" style="left:1697px;top:952.8px;width:75.5px;height:7px;background:#0a6cff;border-radius:3.5px;"></div>
<div class="b" style="left:1761.3px;top:945.0999999999999px;width:22.4px;height:22.4px;background:#c9c9c9;border-radius:12px;box-shadow:0 1px 2px rgba(0,0,0,0.25);"></div>
<div class="t" style="left:1483.00px;top:996.70px;font:400 16px/22px 'Liberation Sans',sans-serif;color:#2a2a2a;letter-spacing:0.185px;">History Access</div>
<div class="b" style="left:1601px;top:987px;width:311.5px;height:40px;background:#e9e9e9;border-radius:9px;"></div>
<div class="b" style="left:1758px;top:988.7px;width:153.5px;height:36.8px;background:#ffffff;border-radius:7.5px;box-shadow:0 0.5px 1.5px rgba(0,0,0,0.18);"></div>
<div class="t" style="left:1660.80px;top:995.90px;font:400 17px/24px 'Liberation Sans',sans-serif;color:#6b6b6b;letter-spacing:0.260px;-webkit-text-stroke:0.3px #6b6b6b;">Hide</div>
<div class="t" style="left:1806.25px;top:995.90px;font:400 17px/24px 'Liberation Sans',sans-serif;color:#0a6cff;letter-spacing:0.384px;-webkit-text-stroke:0.45px #0a6cff;">Include</div>
<div class="t" style="left:1601.00px;top:1033.10px;font:400 15.6px/22px 'Liberation Sans',sans-serif;color:#757575;letter-spacing:0.252px;-webkit-text-stroke:0.2px #757575;">If the generated image is being</div>
<div class="t" style="left:1601.00px;top:1055.60px;font:400 15.6px/22px 'Liberation Sans',sans-serif;color:#757575;letter-spacing:0.260px;-webkit-text-stroke:0.2px #757575;">incorporated into a larger asset, you can</div>
<div class="t" style="left:1601.00px;top:1078.10px;font:400 15.6px/22px 'Liberation Sans',sans-serif;color:#757575;letter-spacing:0.289px;-webkit-text-stroke:0.2px #757575;">choose to hide it from the user’s history.</div>
<div class="b" style="left:1449px;top:214px;width:480px;height:39px;background:#f6f6f6;"></div>
<div class="b" style="left:1449px;top:253px;width:480px;height:1px;background:#c6c6c6;"></div>
<div class="t" style="left:1590.70px;top:223.10px;font:400 16px/22px 'Liberation Sans',sans-serif;color:#0a6cff;letter-spacing:0.180px;">Configuration</div>
<div class="t" style="left:1708.60px;top:223.10px;font:400 16px/22px 'Liberation Sans',sans-serif;color:#2a2a2a;letter-spacing:-0.025px;">Quick Help</div>
<div class="b" style="left:1580.5px;top:251px;width:118px;height:2.5px;background:#0a6cff;"></div>
<div class="b" style="left:1449px;top:1130.5px;width:480px;height:1px;background:#dedede;"></div>
<div class="b" style="left:1449px;top:1131.5px;width:480px;height:39px;background:#f6f6f6;"></div>
<svg class="b" style="left:1461.50px;top:1143.80px;" width="14" height="15" viewBox="0 0 14 15"><path d="M1.4 1.6 L12.4 7.5 L1.4 13.4 Z" fill="none" stroke="#2a2a2a" stroke-width="1.5" stroke-linejoin="round"/></svg>
<div class="t" style="left:1480.80px;top:1141.00px;font:400 16px/22px 'Liberation Sans',sans-serif;color:#2a2a2a;letter-spacing:0.009px;">Test Block</div>
</div></body></html>
